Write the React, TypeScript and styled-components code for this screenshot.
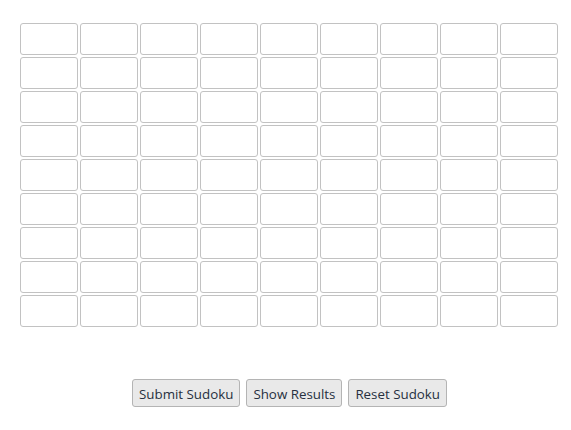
import React from "react";
import styled, { createGlobalStyle } from "styled-components";

const Global = createGlobalStyle`
  html, body { margin: 0; padding: 0; background: #fff; }
  body { font-family: "Open Sans", "Liberation Sans", sans-serif; }
`;

const Page = styled.div`
  width: 571px;
  height: 430px;
  box-sizing: border-box;
  padding: 23px 0 0 20px;
  display: flex;
  flex-direction: column;
`;

const Board = styled.div`
  display: grid;
  grid-template-columns: repeat(9, 58px);
  grid-auto-rows: 32px;
  gap: 2px;
`;

const Cell = styled.input`
  box-sizing: border-box;
  width: 58px;
  height: 32px;
  margin: 0;
  border: 1px solid #c2c2c2;
  border-radius: 3px;
  background: #fff;
  font-family: "Open Sans", sans-serif;
  font-size: 14px;
  text-align: center;
  outline: none;
`;

const Actions = styled.div`
  display: flex;
  gap: 6px;
  margin-top: 52px;
  padding-left: 112px;
`;

const Button = styled.button`
  box-sizing: border-box;
  height: 28px;
  padding: 2px 6px 0;
  border: 1px solid #b4b4b4;
  border-radius: 3px;
  background: #e9e9e9;
  color: #263040;
  font-family: "Open Sans", sans-serif;
  font-size: 13.333px;
  cursor: pointer;
`;

export default function App() {
  const cells = Array.from({ length: 81 }, (_, i) => i);
  return (
    <>
      <Global />
      <Page>
        <Board>
          {cells.map((i) => (
            <Cell key={i} type="text" maxLength={1} />
          ))}
        </Board>
        <Actions>
          <Button>Submit Sudoku</Button>
          <Button>Show Results</Button>
          <Button>Reset Sudoku</Button>
        </Actions>
      </Page>
    </>
  );
}
